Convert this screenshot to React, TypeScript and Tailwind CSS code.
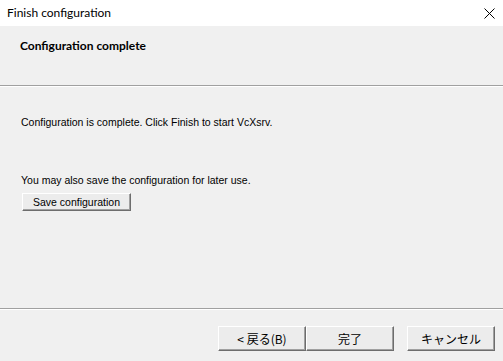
const ui = "font-['Lato','Noto_Sans',sans-serif]";
const gothic = "font-['Liberation_Sans','Noto_Sans_CJK_JP',sans-serif]";
const jp = "font-['Noto_Sans_CJK_JP',sans-serif]";

const Separator = () => (
  <div>
    <div className="h-px bg-[#a0a0a0]" />
    <div className="h-px bg-white" />
  </div>
);

const DialogButton = ({ label, className = "" }: { label: string; className?: string }) => (
  <button
    className={`h-[25px] w-[88px] bg-[#ececec] border border-t-white border-l-white border-b-[#6d6d6d] border-r-[#6d6d6d] shadow-[inset_-1px_-1px_0_#a0a0a0] text-[12px] text-black ${jp} ${className}`}
  >
    {label}
  </button>
);

export default function App() {
  return (
    <div className="w-[503px] h-[361px] bg-[#f0f0f0] flex flex-col overflow-hidden">
      <div className={`h-[26px] bg-white flex items-center justify-between pl-[7px] pr-[8px] ${ui}`}>
        <span className="text-[12px] text-black">Finish configuration</span>
        <svg width="11" height="11" viewBox="0 0 11 11">
          <path d="M0.5 0.5L10.5 10.5M10.5 0.5L0.5 10.5" stroke="#000" strokeWidth="1" />
        </svg>
      </div>

      <div className={`h-[59px] pl-[20px] pt-[6px] ${ui}`}>
        <span className="text-[12px] font-bold text-black">Configuration complete</span>
      </div>
      <Separator />

      <div className={`flex-1 pl-[21px] pt-[28px] text-[10.5px] leading-[14px] text-black ${gothic}`}>
        <p>Configuration is complete. Click Finish to start VcXsrv.</p>
        <p className="mt-[44px]">You may also save the configuration for later use.</p>
        <button className="mt-[6px] ml-px h-[18px] w-[109px] bg-[#ececec] border border-t-white border-l-white border-b-[#6d6d6d] border-r-[#6d6d6d] shadow-[inset_-1px_-1px_0_#a0a0a0] text-[10.5px] text-black">
          Save configuration
        </button>
      </div>

      <Separator />
      <div className="h-[51px] flex items-start justify-end pt-[16px] pr-[8px]">
        <DialogButton label="< 戻る(B)" />
        <DialogButton label="完了" />
        <DialogButton label="キャンセル" className="ml-[13px]" />
      </div>
    </div>
  );
}
